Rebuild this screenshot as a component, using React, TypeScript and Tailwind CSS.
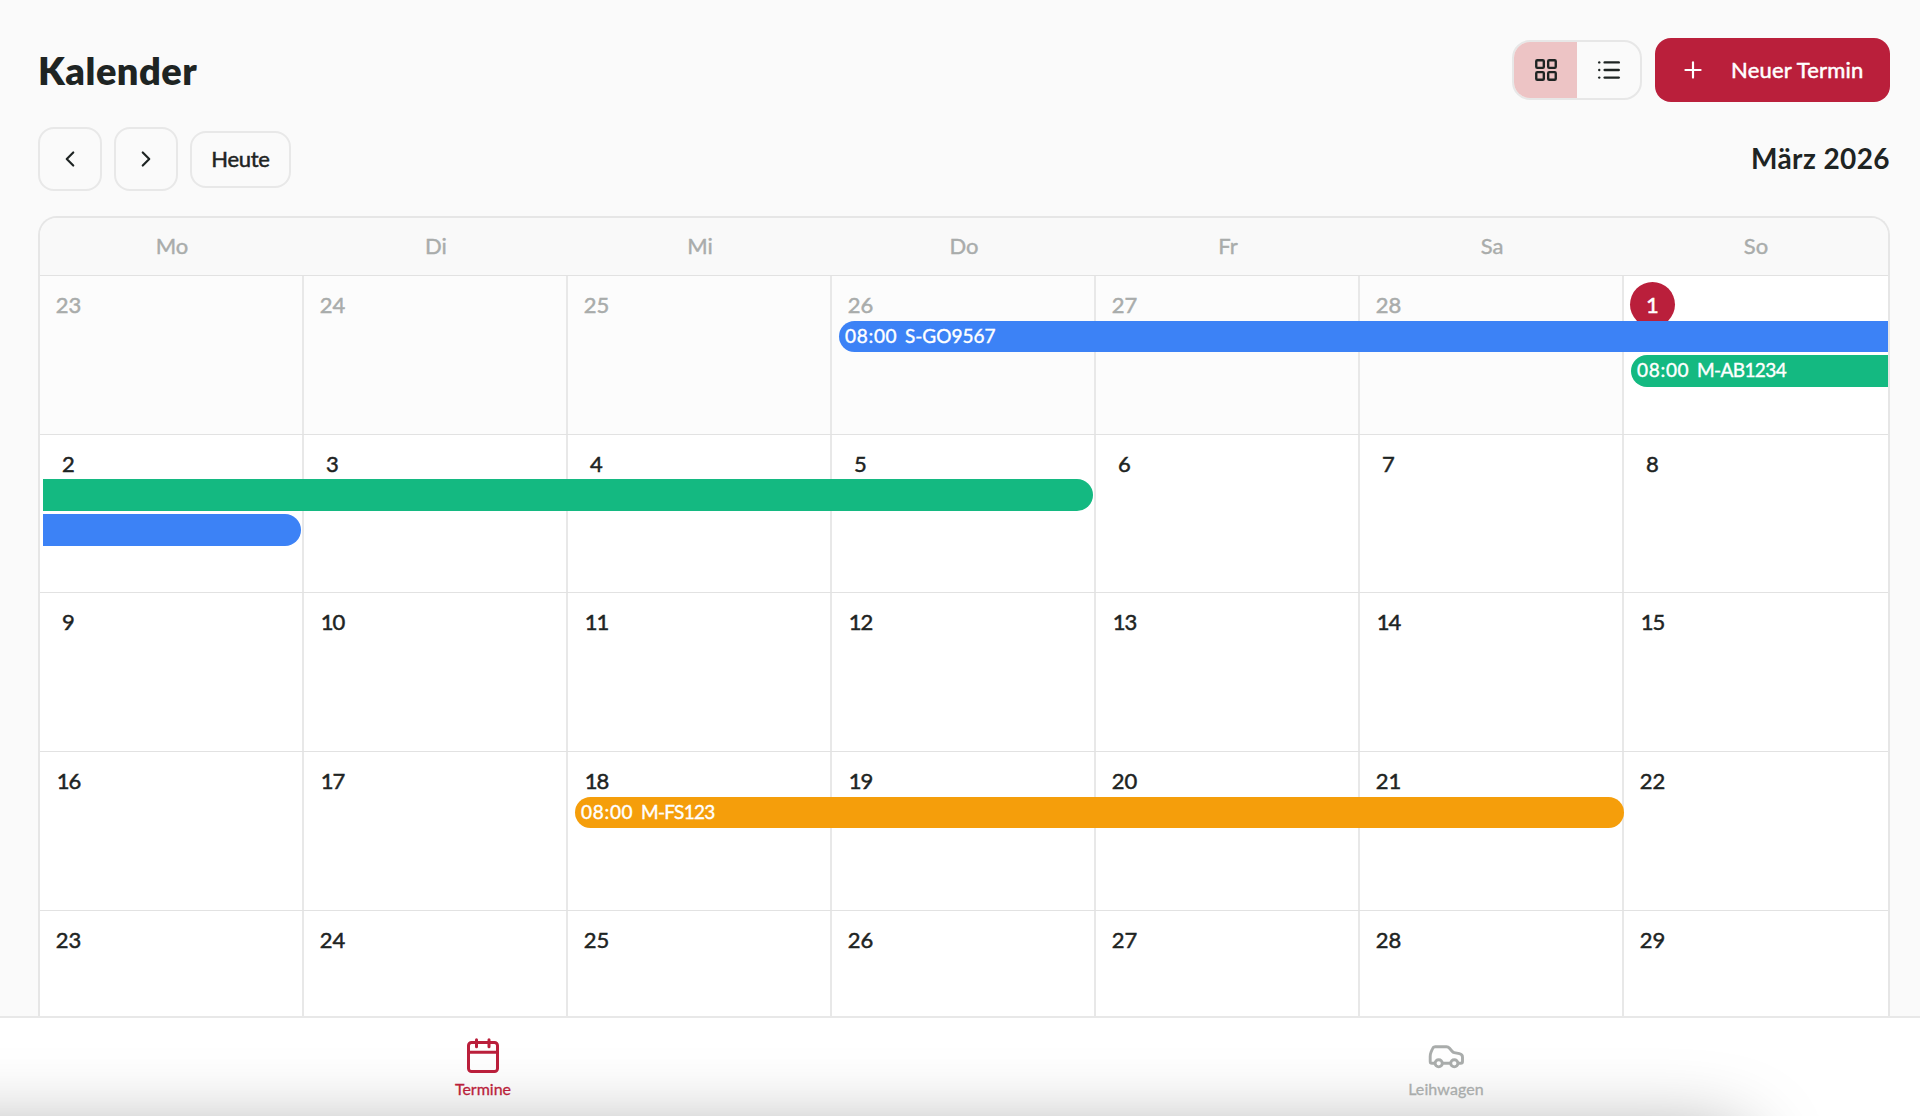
import { useState } from "react";
import clsx from "clsx";
import { ChevronLeft, ChevronRight, LayoutGrid, List, Plus } from "lucide-react";

type CalendarEvent = {
  time?: string;
  plate?: string;
  plateClass?: string;
  color: string;
  start: number; // column 1-7
  span: number;
  opens: boolean;
  closes: boolean;
};

type Week = {
  days: number[];
  events: CalendarEvent[];
};

const weekdays = ["Mo", "Di", "Mi", "Do", "Fr", "Sa", "So"];

const weeks: Week[] = [
  {
    days: [23, 24, 25, 26, 27, 28, 1],
    events: [
      { time: "08:00", plate: "S-GO9567", color: "bg-[#3c82f6]", start: 4, span: 4, opens: true, closes: false },
      {
        time: "08:00",
        plate: "M-AB1234",
        plateClass: "tracking-[-0.6px]",
        color: "bg-[#14b981]",
        start: 7,
        span: 1,
        opens: true,
        closes: false,
      },
    ],
  },
  {
    days: [2, 3, 4, 5, 6, 7, 8],
    events: [
      { color: "bg-[#14b981]", start: 1, span: 4, opens: false, closes: true },
      { color: "bg-[#3c82f6]", start: 1, span: 1, opens: false, closes: true },
    ],
  },
  { days: [9, 10, 11, 12, 13, 14, 15], events: [] },
  {
    days: [16, 17, 18, 19, 20, 21, 22],
    events: [
      {
        time: "08:00",
        plate: "M-FS123",
        plateClass: "tracking-[-0.7px]",
        color: "bg-[#f59e0b]",
        start: 3,
        span: 4,
        opens: true,
        closes: true,
      },
    ],
  },
  { days: [23, 24, 25, 26, 27, 28, 29], events: [] },
];

const CalendarIcon = () => (
  <svg width="34" height="38" viewBox="0 0 34 38" fill="none" stroke="currentColor" strokeWidth="3" strokeLinecap="round">
    <rect x="2.5" y="6.5" width="29" height="29" rx="3" />
    <path d="M2.500 16.300h29M10.500 3.800v7M23 3.800v7" />
  </svg>
);

const CarIcon = () => (
  <svg width="36" height="38" viewBox="0 0 36 38" fill="none" stroke="currentColor" strokeWidth="2.9" strokeLinejoin="round">
    <path d="M7 27.300H4c-1.200 0-1.800-.6-1.800-1.800v-5c0-1.600.2-2.700.8-4.200l1.500-3.600c.5-1.300 1.200-1.900 2.600-1.900h11.400c1.200 0 2 .3 2.800 1.200l2.800 3.300c.6.7 1.200 1.100 2.100 1.300l5.200 1.100c2 .4 3.100 1.500 3.100 3.500v4.300c0 1.200-.6 1.800-1.800 1.800H30M14.300 27.300h8.400" />
    <circle cx="10.700" cy="27.300" r="3.600" />
    <circle cx="26.300" cy="27.300" r="3.600" />
  </svg>
);

const EventBar = ({ event, row }: { event: CalendarEvent; row: number }) => (
  <div
    className={clsx(
      "flex h-[31.7px] items-center overflow-hidden whitespace-nowrap pb-px pl-[6px] text-[19px] text-white [-webkit-text-stroke:0.4px]",
      event.color,
      event.opens ? "ml-[7px] rounded-l-full" : "ml-[3px]",
      event.closes && "rounded-r-full",
      event.closes && !event.opens && "mr-[3px]"
    )}
    style={{ gridColumn: `${event.start} / span ${event.span}`, gridRow: row }}
  >
    {event.time && <span className="w-[60px] tracking-[0.7px]">{event.time}</span>}
    {event.plate && <span className={event.plateClass}>{event.plate}</span>}
  </div>
);

const WeekRow = ({ week, first }: { week: Week; first: boolean }) => (
  <div className="relative grid h-[158.7px] shrink-0 grid-cols-7 border-t border-[#e2e2e2]">
    {week.days.map((day, i) => {
      const outside = first && day > 7;
      const today = first && day === 1;
      return (
        <div
          key={day}
          className={clsx(
            "pl-[6px] pt-[6px]",
            i < 6 && "border-r-2 border-[#e8e8e8]",
            outside ? "bg-[#fcfcfc] text-[#a9acab]" : "bg-white text-[#1e2423]"
          )}
        >
          <div
            className={clsx(
              "flex size-[45px] items-center justify-center rounded-full text-[22px] [-webkit-text-stroke:0.5px]",
              today && "bg-[#ba1f3b] text-white",
              day > 9 && day < 20 && "tracking-[-1px]"
            )}
          >
            {day}
          </div>
        </div>
      );
    })}
    <div className="absolute inset-x-0 top-[44.5px] grid grid-cols-7 gap-y-[3.2px]">
      {week.events.map((event, i) => (
        <EventBar key={i} event={event} row={i + 1} />
      ))}
    </div>
  </div>
);

const App = () => {
  const [view, setView] = useState("grid");

  return (
    <div className="flex h-[1116px] w-full flex-col overflow-hidden bg-[#fafafa] font-['Lato',sans-serif] text-[#1e2423]">
      <main className="flex min-h-0 flex-1 flex-col overflow-hidden pl-[38px] pr-[30px] pt-[38px]">
        <header className="flex h-16 shrink-0 items-center justify-between">
          <h1 className="text-[38px] font-extrabold tracking-[0.5px]">Kalender</h1>
          <div className="flex items-center gap-[13px]">
            <div className="flex h-[60px] w-[130px] overflow-hidden rounded-[18px] border-2 border-[#e7e7e7]">
              <button
                onClick={() => setView("grid")}
                className={clsx("flex flex-1 items-center justify-center", view === "grid" && "bg-[#edc4c5]")}
              >
                <LayoutGrid size={26} strokeWidth={2.2} />
              </button>
              <button
                onClick={() => setView("list")}
                className={clsx("flex flex-1 items-center justify-center", view === "list" && "bg-[#edc4c5]")}
              >
                <List size={26} strokeWidth={2.2} />
              </button>
            </div>
            <button className="flex h-16 w-[235px] items-center rounded-[16px] bg-[#ba1f3b] pl-[25px] text-[22px] text-white">
              <Plus size={26} strokeWidth={2} />
              <span className="ml-[25px] whitespace-nowrap pb-[2px] tracking-[0.2px] [-webkit-text-stroke:0.5px]">
                Neuer Termin
              </span>
            </button>
          </div>
        </header>

        <div className="mt-[25px] flex h-16 shrink-0 items-center justify-between">
          <div className="flex items-center gap-3">
            <button className="flex size-16 items-center justify-center rounded-[16px] border-2 border-[#e8e8e8]">
              <ChevronLeft size={26} />
            </button>
            <button className="flex size-16 items-center justify-center rounded-[16px] border-2 border-[#e8e8e8]">
              <ChevronRight size={26} />
            </button>
            <button className="flex h-[57px] w-[101px] items-center justify-center rounded-[16px] border-2 border-[#e8e8e8] pb-[2px] text-[22px] tracking-[-0.3px] [-webkit-text-stroke:0.5px]">
              Heute
            </button>
          </div>
          <h2 className="pb-[2px] text-[28px] font-bold tracking-[0.4px]">März 2026</h2>
        </div>

        <section className="mt-[25px] flex min-h-0 flex-1 flex-col overflow-hidden rounded-t-[19px] border-2 border-b-0 border-[#e6e6e6]">
          <div className="grid h-[57px] shrink-0 grid-cols-7 bg-[#f9f9f9] pb-[2px] text-[22px] text-[#a9acab] [-webkit-text-stroke:0.4px]">
            {weekdays.map((name) => (
              <div key={name} className="flex items-center justify-center">
                {name}
              </div>
            ))}
          </div>
          {weeks.map((week, i) => (
            <WeekRow key={i} week={week} first={i === 0} />
          ))}
        </section>
      </main>

      <nav className="relative grid h-[100px] shrink-0 grid-cols-2 overflow-hidden border-t-2 border-[#e8e8e8] bg-white text-base [-webkit-text-stroke:0.3px]">
        {/* soft shadow rising from below the bar */}
        <div className="absolute -left-40 top-[118px] h-40 w-[1907px] rounded-[30px] shadow-[0_0_80px_rgba(0,0,0,0.4)]" />
        <button className="relative flex flex-col items-center pl-[6px] pt-[18px] text-[#ba1f3b]">
          <CalendarIcon />
          <span className="mt-[3px]">Termine</span>
        </button>
        <button className="relative flex flex-col items-center pl-3 pt-[18px] text-[#a9acab]">
          <CarIcon />
          <span className="mt-[3px] tracking-[0.1px]">Leihwagen</span>
        </button>
      </nav>
    </div>
  );
};

export default App;
